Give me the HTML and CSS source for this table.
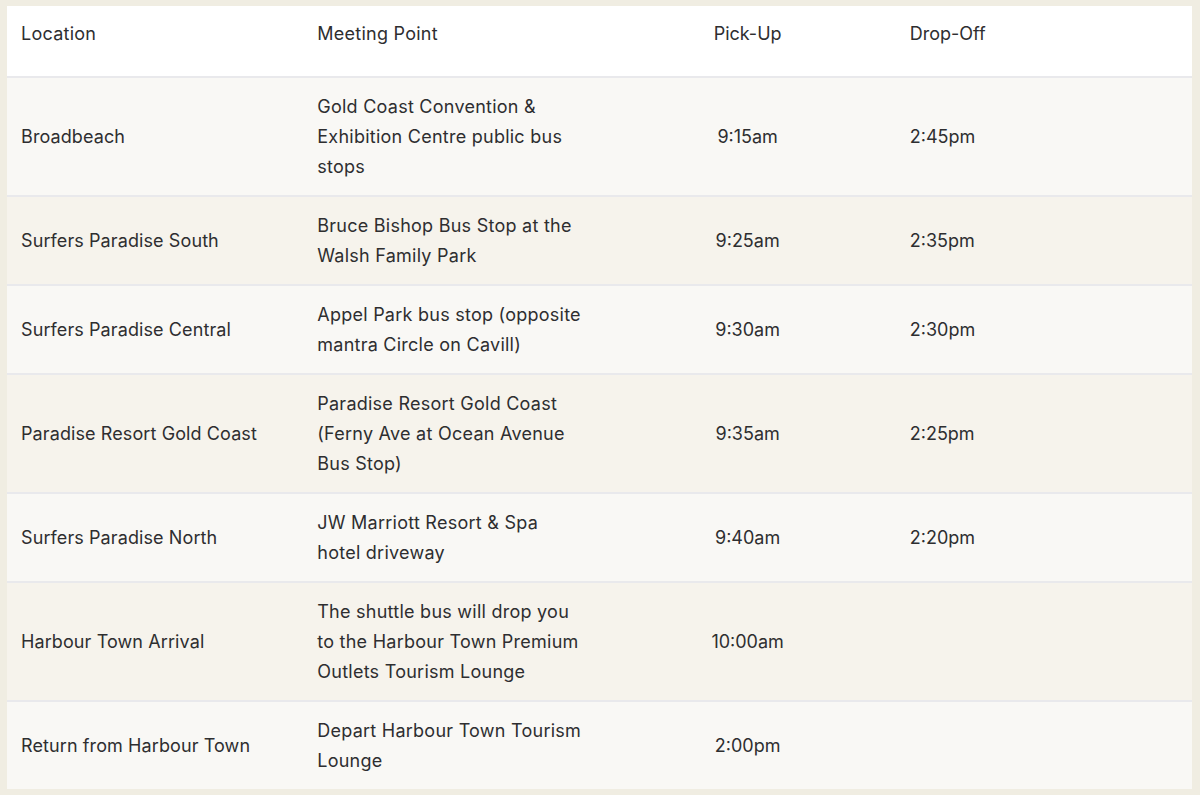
FILE: index.html
```html
<!DOCTYPE html>
<html lang="en">
<head>
  <meta charset="UTF-8">
  <meta name="viewport" content="width=device-width, initial-scale=1.0">
  <title>Shuttle Timetable</title>
  <link rel="stylesheet" href="styles.css">
</head>
<body>
  <table class="timetable">
    <thead>
      <tr>
        <th>Location</th>
        <th>Meeting Point</th>
        <th class="time">Pick-Up</th>
        <th class="time drop">Drop-Off</th>
      </tr>
    </thead>
    <tbody>
      <tr>
        <td>Broadbeach</td>
        <td>Gold Coast Convention &amp; Exhibition Centre public bus stops</td>
        <td class="time">9:15am</td>
        <td class="time drop">2:45pm</td>
      </tr>
      <tr>
        <td>Surfers Paradise South</td>
        <td>Bruce Bishop Bus Stop at the Walsh Family Park</td>
        <td class="time">9:25am</td>
        <td class="time drop">2:35pm</td>
      </tr>
      <tr>
        <td>Surfers Paradise Central</td>
        <td>Appel Park bus stop (opposite mantra Circle on Cavill)</td>
        <td class="time">9:30am</td>
        <td class="time drop">2:30pm</td>
      </tr>
      <tr>
        <td>Paradise Resort Gold Coast</td>
        <td>Paradise Resort Gold Coast (Ferny Ave at Ocean Avenue Bus Stop)</td>
        <td class="time">9:35am</td>
        <td class="time drop">2:25pm</td>
      </tr>
      <tr>
        <td>Surfers Paradise North</td>
        <td>JW Marriott Resort &amp; Spa hotel driveway</td>
        <td class="time">9:40am</td>
        <td class="time drop">2:20pm</td>
      </tr>
      <tr>
        <td>Harbour Town Arrival</td>
        <td>The shuttle bus will drop you to the Harbour Town Premium Outlets Tourism Lounge</td>
        <td class="time">10:00am</td>
        <td class="time drop"></td>
      </tr>
      <tr>
        <td>Return from Harbour Town</td>
        <td>Depart Harbour Town Tourism Lounge</td>
        <td class="time">2:00pm</td>
        <td class="time drop"></td>
      </tr>
    </tbody>
  </table>
</body>
</html>
```

FILE: styles.css
```css
body {
  margin: 0;
  padding: 6px 8px 7px 7px;
  background-color: #f0ede2;
  color: #2e2e30;
  font-family: "Inter", "Liberation Sans", sans-serif;
  font-size: 18px;
  letter-spacing: 0.25px;
}
.timetable {
  width: 100%;
  border-collapse: collapse;
  table-layout: fixed;
}
.timetable th,
.timetable td {
  width: 25%;
  text-align: left;
  vertical-align: middle;
  line-height: 30px;
  padding: 13.5px 14px;
  font-weight: normal;
}
.timetable td:first-child {
  letter-spacing: 0.1px;
}
.timetable th {
  background-color: #fff;
  vertical-align: top;
  padding: 13px 14px 27px 14px;
}
.timetable tbody tr {
  border-top: 2px solid #e9e9ec;
  background-color: #f9f8f5;
}
.timetable tbody tr:nth-child(even) {
  background-color: #f6f3ec;
}
.timetable .time {
  text-align: center;
  letter-spacing: 0;
}
.timetable .time.drop {
  text-align: left;
}
```
